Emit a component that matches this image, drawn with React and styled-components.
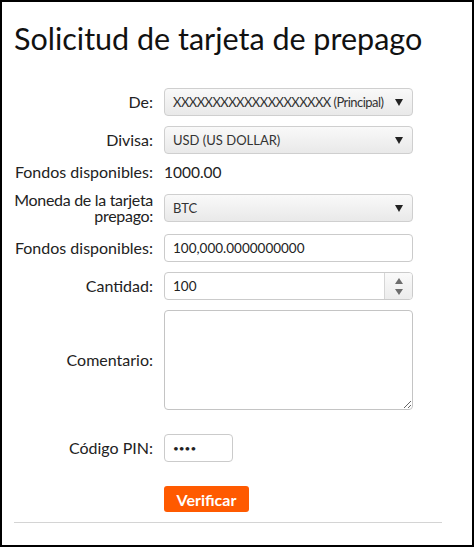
import React from 'react';
import styled, { createGlobalStyle } from 'styled-components';

const GlobalStyle = createGlobalStyle`
  html, body {
    margin: 0;
    padding: 0;
    background: #fff;
  }
  body {
    font-family: Lato, "Open Sans", sans-serif;
    color: #222;
  }
`;

const Page = styled.div`
  box-sizing: border-box;
  width: 474px;
  height: 547px;
  border: 2px solid #000;
`;

const Title = styled.h1`
  margin: 0 0 0 12px;
  padding-top: 18px;
  font-size: 30.5px;
  font-weight: 400;
  color: #111;
  height: 86px;
  box-sizing: border-box;
`;

const Form = styled.form`
  display: flex;
  flex-direction: column;
  padding-left: 6px;
`;

const Row = styled.div`
  display: grid;
  grid-template-columns: 145px 249px;
  column-gap: 11px;
  align-items: center;
  margin-bottom: ${(p) => p.$gap ?? 10}px;
`;

const Label = styled.label`
  text-align: right;
  font-size: 16px;
  line-height: 16px;
  color: #222;
  letter-spacing: ${(p) => (p.$narrow ? '-0.3px' : '0')};
`;

const Value = styled.div`
  font-size: 15.5px;
  line-height: 16px;
  color: #222;
`;

const SelectBox = styled.div`
  box-sizing: border-box;
  height: 28px;
  border: 1px solid #cfcfcf;
  border-radius: 4px;
  background: linear-gradient(#f9f9f9, #e9e9e9);
  display: flex;
  align-items: center;
  padding: 0 9px 0 8px;
  font-size: 13px;
  color: #333;
`;

const SelectText = styled.span`
  flex: 1;
  white-space: nowrap;
  letter-spacing: ${(p) => (p.$tight ? '-0.55px' : '0')};
`;

const Caret = styled.span`
  width: 0;
  height: 0;
  border-left: 4.5px solid transparent;
  border-right: 4.5px solid transparent;
  border-top: 7px solid #222;
  margin-left: 6px;
`;

const Field = styled.div`
  box-sizing: border-box;
  height: 28px;
  width: ${(p) => p.$width || '249px'};
  border: 1px solid #cbcbcb;
  border-radius: 4px;
  background: #fff;
  display: flex;
  align-items: stretch;
  overflow: hidden;
`;

const Input = styled.input`
  flex: 1;
  min-width: 0;
  border: none;
  outline: none;
  padding: 0 8px;
  font-family: Lato, "Open Sans", sans-serif;
  font-size: ${(p) => (p.type === 'password' ? '10px' : '13.5px')};
  color: #222;
  background: transparent;
`;

const Spinner = styled.div`
  width: 27px;
  border-left: 1px solid #d6d6d6;
  background: linear-gradient(#fafafa, #ececec);
  display: flex;
  flex-direction: column;
  align-items: center;
  justify-content: center;
  gap: 5px;
`;

const Arrow = styled.span`
  width: 0;
  height: 0;
  border-left: 4px solid transparent;
  border-right: 4px solid transparent;
  ${(p) =>
    p.$up
      ? 'border-bottom: 6px solid #6d6d6d;'
      : 'border-top: 6px solid #6d6d6d;'}
`;

const TextArea = styled.textarea`
  box-sizing: border-box;
  width: 249px;
  height: 100px;
  border: 1px solid #c4c4c4;
  border-radius: 4px;
  font-family: Lato, "Open Sans", sans-serif;
  font-size: 13px;
  margin: 0;
  padding: 6px 8px;
  display: block;
`;

const Button = styled.button`
  grid-column: 2;
  justify-self: start;
  width: 85px;
  height: 26px;
  border: none;
  border-radius: 3px;
  background: #ff5a00;
  color: #fff;
  font-family: Lato, "Open Sans", sans-serif;
  font-size: 16px;
  font-weight: 700;
  padding: 0;
  cursor: pointer;
`;

const Divider = styled.hr`
  margin: 0 0 0 12px;
  width: 428px;
  border: none;
  border-top: 1px solid #d4d4d4;
`;

const Select = ({ children, tight }) => (
  <SelectBox>
    <SelectText $tight={tight}>{children}</SelectText>
    <Caret />
  </SelectBox>
);

const App = () => (
  <Page>
    <GlobalStyle />
    <Title>Solicitud de tarjeta de prepago</Title>
    <Form onSubmit={(e) => e.preventDefault()}>
      <Row>
        <Label>De:</Label>
        <Select tight>XXXXXXXXXXXXXXXXXXXX (Principal)</Select>
      </Row>
      <Row>
        <Label>Divisa:</Label>
        <Select>USD (US DOLLAR)</Select>
      </Row>
      <Row $gap={12}>
        <Label>Fondos disponibles:</Label>
        <Value>1000.00</Value>
      </Row>
      <Row>
        <Label $narrow>Moneda de la tarjeta prepago:</Label>
        <Select>BTC</Select>
      </Row>
      <Row>
        <Label>Fondos disponibles:</Label>
        <Field>
          <Input defaultValue="100,000.0000000000" />
        </Field>
      </Row>
      <Row>
        <Label>Cantidad:</Label>
        <Field>
          <Input defaultValue="100" />
          <Spinner>
            <Arrow $up />
            <Arrow />
          </Spinner>
        </Field>
      </Row>
      <Row $gap={24}>
        <Label>Comentario:</Label>
        <TextArea />
      </Row>
      <Row $gap={24}>
        <Label>Código PIN:</Label>
        <Field $width="69px">
          <Input type="password" defaultValue="1234" />
        </Field>
      </Row>
      <Row $gap={10}>
        <Button type="submit">Verificar</Button>
      </Row>
    </Form>
    <Divider />
  </Page>
);

export default App;
